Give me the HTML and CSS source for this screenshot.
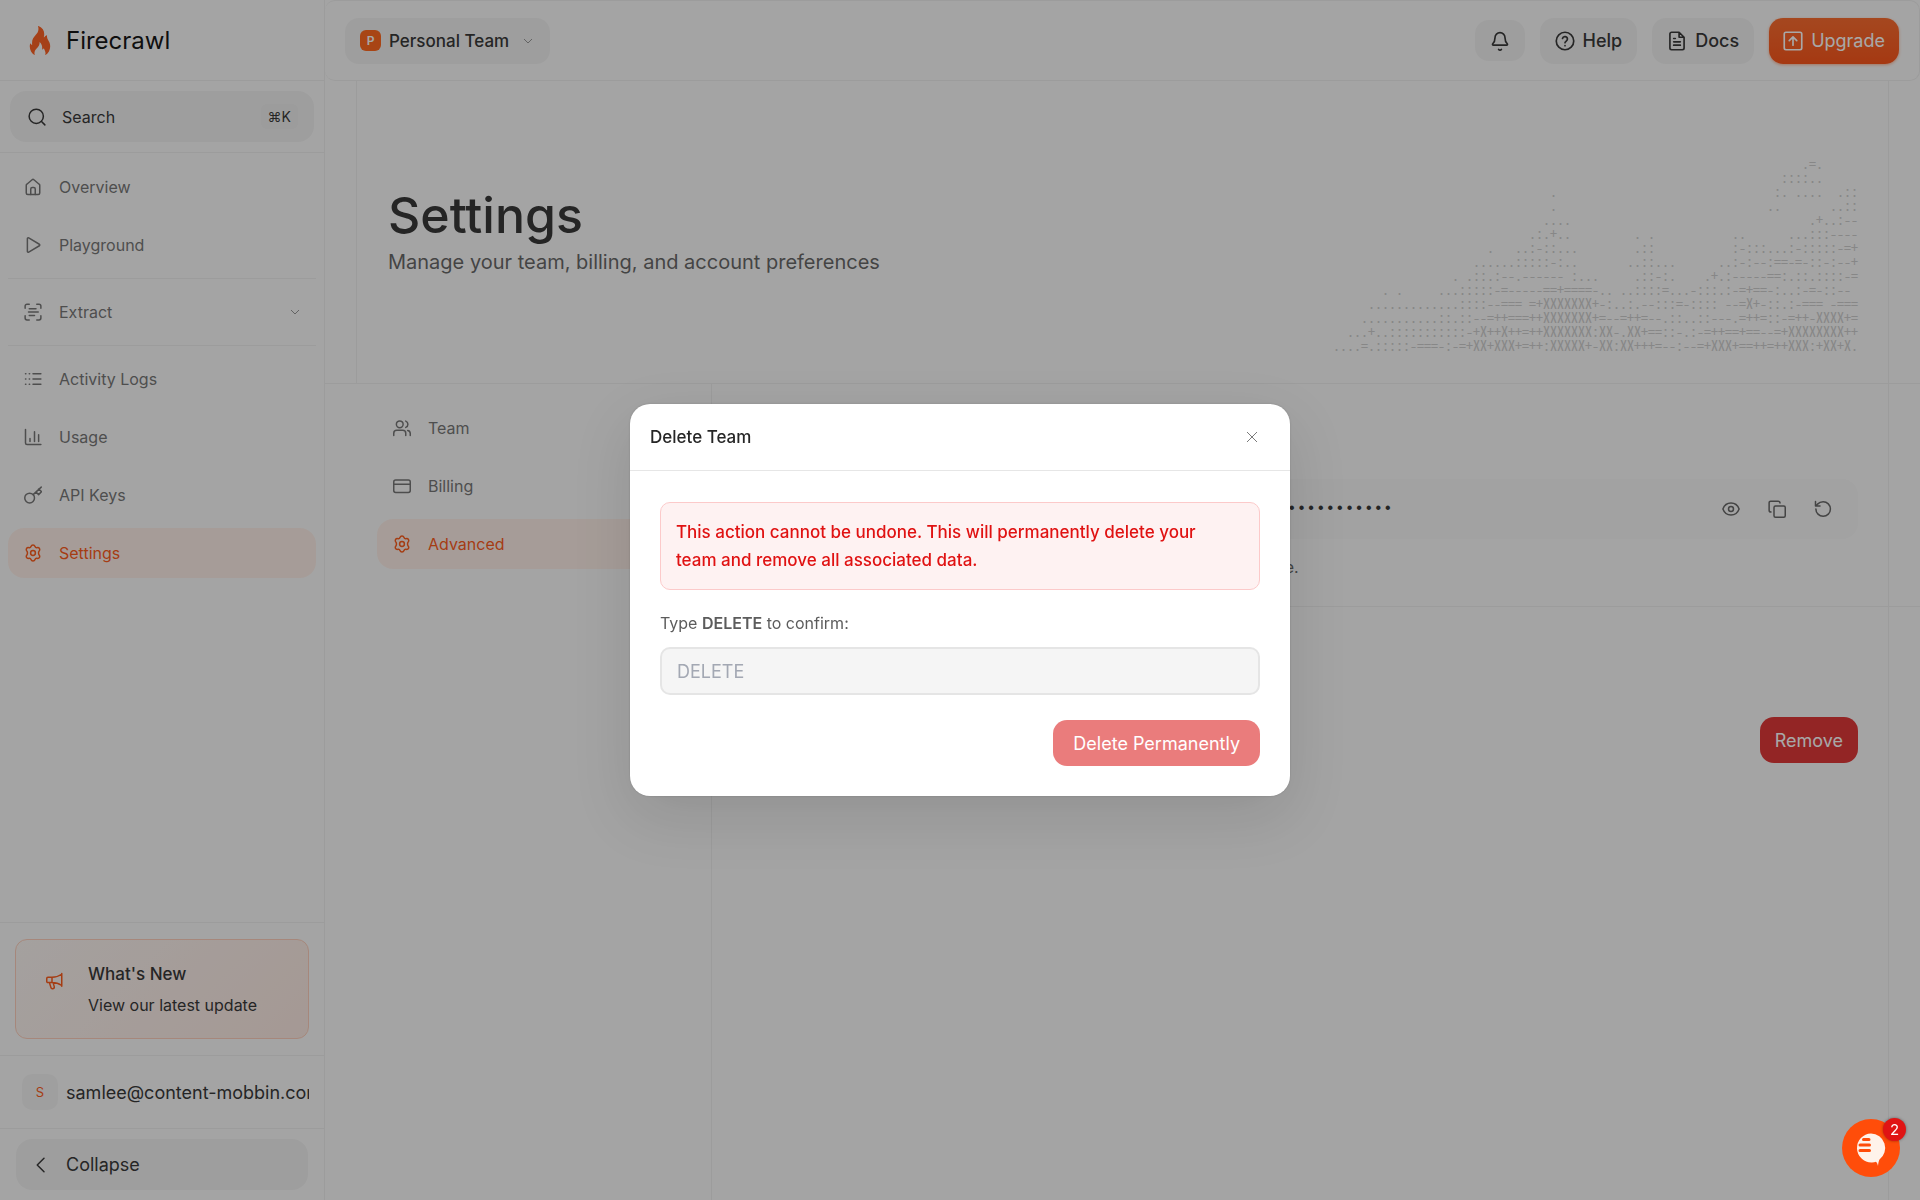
FILE: index.html
```html
<!DOCTYPE html>
<html lang="en">
<head>
    <meta charset="UTF-8">
    <meta name="viewport" content="width=device-width, initial-scale=1.0">
    <title>Settings - Firecrawl</title>
    <link rel="stylesheet" href="styles.css">
</head>
<body>
    <div class="app">
        <aside class="sidebar">
            <a class="brand" href="#">
                <svg class="brand-icon" viewBox="4 1.5 12 16" fill="currentColor"><path d="M13.76 6.614c-.622.185-1.092.603-1.435 1.057-.074.097-.228.024-.198-.095.658-2.706-.211-4.955-2.921-6.062-.138-.056-.281.067-.245.211 1.233 4.949-3.952 4.532-3.296 10.142.011.096-.097.162-.176.106-.246-.176-.52-.544-.708-.803-.055-.076-.175-.055-.2.036-.15.542-.221 1.052-.221 1.56 0 1.971 1.013 3.707 2.547 4.713.088.057.201-.025.171-.126a3 3 0 0 1-.127-.833c0-.177.011-.359.039-.528.064-.425.212-.829.46-1.197.85-1.276 2.554-2.509 2.282-4.183-.017-.105.108-.175.186-.103 1.201 1.097 1.438 2.573 1.241 3.896-.017.115.127.176.2.086.184-.23.408-.431.652-.583.061-.038.142-.009.165.059.136.395.337.765.528 1.136.227.446.349.954.33 1.493-.01.262-.053.515-.126.756-.031.102.081.187.17.129 1.535-1.006 2.549-2.742 2.549-4.715 0-.685-.12-1.357-.347-1.987-.476-1.321-1.684-2.313-1.378-4.035.014-.082-.062-.154-.142-.13z"/></svg>
                <span>Firecrawl</span>
            </a>

            <div class="search-wrap">
                <button class="search" type="button">
                    <svg class="icon" viewBox="0 0 24 24"><circle cx="11" cy="11" r="9.5"/><path d="m22.5 22.500-4.500-4.500"/></svg>
                    <span>Search</span>
                    <kbd>⌘K</kbd>
                </button>
            </div>

            <nav class="nav">
                <a class="nav-item" href="#">
                    <svg class="icon" viewBox="0 0 24 24"><path d="M3 10a2 2 0 0 1 .8-1.700l7-6a2 2 0 0 1 2.400 0l7 6A2 2 0 0 1 21 10v10a2 2 0 0 1-2 2H5a2 2 0 0 1-2-2z"/><path d="M9 22v-7.500a2 2 0 0 1 2-2h2a2 2 0 0 1 2 2V22"/></svg>
                    <span>Overview</span>
                </a>
                <a class="nav-item" href="#">
                    <svg class="icon" viewBox="0 0 24 24"><path d="M4.500 3.500v17a1.200 1.200 0 0 0 1.800 1l14.200-8.500a1.200 1.200 0 0 0 0-2L6.300 2.500a1.200 1.200 0 0 0-1.800 1z"/></svg>
                    <span>Playground</span>
                </a>
                <hr>
                <a class="nav-item" href="#">
                    <svg class="icon" viewBox="0 0 24 24"><path d="M1.500 7V4a2.500 2.500 0 0 1 2.500-2.500h3M17 1.500h3A2.500 2.500 0 0 1 22.500 4v3M22.500 17v3a2.500 2.500 0 0 1-2.500 2.500h-3M7 22.500H4A2.500 2.500 0 0 1 1.500 20v-3M7 7.500h9M6 12h13M7 16.500h7"/></svg>
                    <span>Extract</span>
                    <svg class="chevron" viewBox="0 0 10 10"><path d="m1 3 4 4 4-4"/></svg>
                </a>
                <hr>
                <a class="nav-item" href="#">
                    <svg class="icon" viewBox="0 0 24 24"><path d="M2 5h.5M7 5h.5M12 5h10.500M2 12h.5M7 12h.5M12 12h10.500M2 19h.5M7 19h.5M12 19h10.500"/></svg>
                    <span>Activity Logs</span>
                </a>
                <a class="nav-item" href="#">
                    <svg class="icon" viewBox="0 0 24 24"><path d="M2 2v18a2 2 0 0 0 2 2h18.500M8 18v-4M14 18V5M19.500 18V9"/></svg>
                    <span>Usage</span>
                </a>
                <a class="nav-item" href="#">
                    <svg class="icon" viewBox="0 0 24 24"><circle cx="7.500" cy="16" r="6.500"/><path d="M12.200 11.500 23 1.500M16 8l3.500 3.500 4-4-4-3.500"/></svg>
                    <span>API Keys</span>
                </a>
                <a class="nav-item active" href="#">
                    <svg class="icon" viewBox="0 0 24 24"><path d="M12 1.200c1.500 0 2.200.8 2.700 2.200.4 1.100 1.400 1.700 2.500 1.500 1.500-.3 2.700-.2 3.500 1.200s.3 2.500-.7 3.700c-.8.900-.8 3.500 0 4.400 1 1.200 1.500 2.300.7 3.700s-2 1.500-3.500 1.200c-1.100-.2-2.100.4-2.500 1.500-.5 1.400-1.200 2.200-2.700 2.200s-2.200-.8-2.700-2.200c-.4-1.100-1.400-1.700-2.500-1.500-1.500.3-2.700.2-3.500-1.200s-.3-2.500.7-3.700c.8-.9.8-3.500 0-4.400-1-1.200-1.500-2.300-.7-3.700s2-1.500 3.500-1.200c1.100.2 2.100-.4 2.500-1.500C9.800 2 10.500 1.200 12 1.200z"/><circle cx="12" cy="12" r="3.200"/></svg>
                    <span>Settings</span>
                </a>
            </nav>

            <div class="sidebar-block">
                <a class="news" href="#">
                    <svg class="icon" viewBox="0 0 24 24"><path d="M2.500 7H8c5 0 9.500-1.500 13-4v15c-3.500-2.500-8-4-13-4H2.500a1.500 1.500 0 0 1-1.500-1.500v-4A1.500 1.500 0 0 1 2.500 7zM8 7v7M4.500 14l2 6.500a2.300 2.300 0 0 0 4.500-1l-1.500-5M21 2v17"/></svg>
                    <span class="news-text">
                        <strong>What's New</strong>
                        <span>View our latest update</span>
                    </span>
                </a>
            </div>

            <div class="sidebar-block account">
                <span class="avatar">S</span>
                <span class="email">samlee@content-mobbin.com</span>
            </div>

            <div class="sidebar-block collapse-wrap">
                <button class="collapse" type="button">
                    <svg class="icon" viewBox="0 0 24 24"><path d="m16 3-9 9 9 9"/></svg>
                    <span>Collapse</span>
                </button>
            </div>
        </aside>

        <main class="main">
            <header class="topbar">
                <button class="btn btn-team" type="button">
                    <span class="team-badge">P</span>
                    <span>Personal Team</span>
                    <svg class="chevron" viewBox="0 0 10 10"><path d="m1 3 4 4 4-4"/></svg>
                </button>
                <div class="topbar-actions">
                    <button class="btn btn-icon" type="button" aria-label="Notifications">
                        <svg class="icon" viewBox="0 0 24 24"><path d="M10.300 22a2 2 0 0 0 3.400 0M3.300 15.300A1 1 0 0 0 4 17h16a1 1 0 0 0 .7-1.700C19.400 14 18 12.500 18 8A6 6 0 0 0 6 8c0 4.500-1.400 6-2.700 7.300"/></svg>
                    </button>
                    <a class="btn" href="#">
                        <svg class="icon" viewBox="0 0 24 24"><circle cx="12" cy="12" r="10.500"/><path d="M9 9a3 3 0 0 1 5.900 1c0 2-2.900 2.700-2.900 4M12 17.500v.1"/></svg>
                        <span>Help</span>
                    </a>
                    <a class="btn" href="#">
                        <svg class="icon" viewBox="0 0 24 24"><path d="M14.500 1.500H5.500a2 2 0 0 0-2 2v17a2 2 0 0 0 2 2h13a2 2 0 0 0 2-2V7.500zM14.500 1.500v6h6M8 9h2M8 13h8M8 17h8"/></svg>
                        <span>Docs</span>
                    </a>
                    <button class="btn btn-primary" type="button">
                        <svg class="icon" viewBox="0 0 24 24"><rect x="1.500" y="1.500" width="21" height="21" rx="2"/><path d="M12 17V7.500M7.500 11.500 12 7l4.500 4.500"/></svg>
                        <span>Upgrade</span>
                    </button>
                </div>
            </header>

            <section class="hero">
                <div class="hero-inner">
                    <div>
                        <h1>Settings</h1>
                        <p>Manage your team, billing, and account preferences</p>
                    </div>
                    <pre class="ascii" aria-hidden="true">
                                                                   .=.     
                                                                ::::..     
                               .                               :. ....  .::
                               .                              ..       ..::
                              ....                                  .+..:--
                            .:.+..         . .           ..      ...:::----
                      .   ..:-::...        .::           :-:::...:-:::::-=+
                    ......:::::-:..       ..::...      ..:-:--:==-=-::-:--+
                 . .::.:--.------ :...     .::-:.    .+.:-----==:.::.::::-=
       . .     ...:::::-=-----==+====-.. ..::::=...-:::.:-=+==-:..:-=-::-- 
     .............::::--=== =+XXXXXXX+-:..:.--:::=-:::: --=X+-::.:-=== -===
    ...........::.::--=++===++XXXXXXX+=--=++=--.::..::---.=++=::-=++-XXXX+=
  ...+..:::::::::::-+X++X++=++XXXXXXX:XX-.XX+==::-.:-=++==+==--=+XXXXXXXX++
....=.:::::-===-:-=+XX+XXX+=++:XXXXX+-XX:XX+++=--:--=+XXX+==++=++XXX:+XX+X.</pre>
                </div>
            </section>

            <div class="content">
                <nav class="subnav">
                    <a class="nav-item" href="#">
                        <svg class="icon" viewBox="0 0 24 24"><circle cx="9" cy="7" r="4.500"/><path d="M1 22v-3a4 4 0 0 1 4-4h8a4 4 0 0 1 4 4v3M17 2.800a4.500 4.500 0 0 1 0 8.400M19.500 15.200A4 4 0 0 1 23 19v3"/></svg>
                        <span>Team</span>
                    </a>
                    <a class="nav-item" href="#">
                        <svg class="icon" viewBox="0 0 24 24"><rect x="1" y="4" width="22" height="16.500" rx="2.500"/><path d="M1 9.500h22"/></svg>
                        <span>Billing</span>
                    </a>
                    <a class="nav-item active" href="#">
                        <svg class="icon" viewBox="0 0 24 24"><path d="M12 1.200c1.500 0 2.200.8 2.700 2.200.4 1.100 1.400 1.700 2.500 1.500 1.500-.3 2.700-.2 3.500 1.200s.3 2.500-.7 3.700c-.8.900-.8 3.500 0 4.400 1 1.200 1.500 2.300.7 3.700s-2 1.500-3.500 1.200c-1.100-.2-2.100.4-2.500 1.500-.5 1.400-1.200 2.200-2.700 2.200s-2.200-.8-2.700-2.200c-.4-1.100-1.400-1.700-2.500-1.500-1.500.3-2.700.2-3.500-1.200s-.3-2.500.7-3.700c.8-.9.8-3.500 0-4.400-1-1.200-1.500-2.300-.7-3.700s2-1.500 3.500-1.200c1.100.2 2.100-.4 2.500-1.500C9.800 2 10.500 1.200 12 1.200z"/><circle cx="12" cy="12" r="3.200"/></svg>
                        <span>Advanced</span>
                    </a>
                </nav>

                <div class="panels">
                    <section class="panel" aria-label="API key">
                        <div class="secret">
                            <span class="secret-value">••••••••••••••••••••••••••••••••••••••••••••••••••••••••••••••••••</span>
                            <button type="button" aria-label="Show key">
                                <svg class="icon" viewBox="0 0 24 24"><path d="M1.200 12C3 7 7 4 12 4s9 3 10.800 8C21 17 17 20 12 20s-9-3-10.800-8z"/><circle cx="12" cy="12" r="3.300"/></svg>
                            </button>
                            <button type="button" aria-label="Copy key">
                                <svg class="icon" viewBox="0 0 24 24"><rect x="8" y="8" width="15" height="15" rx="2"/><path d="M4 16a2.500 2.500 0 0 1-2.500-2.500V3.500a2 2 0 0 1 2-2h10A2.500 2.500 0 0 1 16 4"/></svg>
                            </button>
                            <button type="button" aria-label="Rotate key">
                                <svg class="icon" viewBox="0 0 24 24"><path d="M2 2v6h6M2.500 12a9.700 9.700 0 1 0 9.700-9.700c-3 0-5.600 1.200-7.500 3.200L2.500 8"/></svg>
                            </button>
                        </div>
                        <p>Keep this key private. Anybody who has it can make requests at any time.</p>
                    </section>
                    <section class="panel danger" aria-label="Delete team">
                        <button class="btn btn-danger" type="button">Remove</button>
                    </section>
                </div>
            </div>
        </main>
    </div>

    <div class="overlay">
        <div class="modal" role="dialog" aria-modal="true" aria-labelledby="modalTitle">
            <div class="modal-header">
                <h2 id="modalTitle">Delete Team</h2>
                <button class="close" type="button" aria-label="Close">
                    <svg viewBox="0 0 12 12"><path d="m1 1 10 10M11 1 1 11"/></svg>
                </button>
            </div>
            <form class="modal-body">
                <p class="alert">This action cannot be undone. This will permanently delete your team and remove all associated data.</p>
                <label for="confirm">Type <strong>DELETE</strong> to confirm:</label>
                <input type="text" id="confirm" name="confirm" placeholder="DELETE">
                <button class="btn btn-delete" type="submit" disabled>Delete Permanently</button>
            </form>
        </div>
    </div>

    <button class="chat" type="button" aria-label="Open chat">
        <svg viewBox="0 0 58 58"><path d="M29 14.500a14.500 14.500 0 1 0 1 29c1.500 0 2.800-.2 4-.7.900.6 1.500 2.200 2 4.200.3-2.500.7-5.300 1.500-6.500A14.500 14.500 0 0 0 29 14.500z" fill="#fff3ea"/><path d="M21.500 20.500h5.500M18 26h9.500M18 31.500h9.500" stroke="#ff4d0a" stroke-width="3" stroke-linecap="round"/></svg>
        <span class="chat-count">2</span>
    </button>
</body>
</html>
```
FILE: styles.css
```css
* {
    box-sizing: border-box;
}
body {
    margin: 0;
    font-family: Inter, "Liberation Sans", sans-serif;
    font-size: 18px;
    color: #262626;
    background-color: #f9f9f9;
}
a {
    color: inherit;
    text-decoration: none;
}
button, input {
    font: inherit;
    color: inherit;
}
button {
    border: none;
    background: none;
    padding: 0;
    cursor: pointer;
}
h1, h2, p {
    margin: 0;
}
.app {
    display: flex;
    min-height: 100vh;
}
.icon {
    width: 18px;
    height: 18px;
    flex: none;
    fill: none;
    stroke: currentColor;
    stroke-width: 2;
    stroke-linecap: round;
    stroke-linejoin: round;
}
.chevron {
    width: 10px;
    height: 10px;
    flex: none;
    fill: none;
    stroke: #8c8c8c;
    stroke-width: 1;
}

/* sidebar */
.sidebar {
    width: 325px;
    flex: none;
    display: flex;
    flex-direction: column;
    border-right: 1px solid #ebebeb;
}
.brand {
    display: flex;
    align-items: center;
    gap: 15px;
    height: 81px;
    padding-left: 29px;
    border-bottom: 1px solid #ebebeb;
    font-size: 24px;
    color: #000;
}
.brand-icon {
    width: 22px;
    height: 29px;
    color: #fa5310;
}
.search-wrap {
    padding: 10px;
    border-bottom: 1px solid #ebebeb;
}
.search {
    display: flex;
    align-items: center;
    gap: 16px;
    width: 100%;
    height: 51px;
    padding: 0 16px 0 18px;
    border-radius: 16px;
    background-color: #efefef;
    font-size: 16px;
    text-align: left;
}
.search kbd {
    margin-left: auto;
    padding: 4px 7px;
    border-radius: 6px;
    background-color: #ebebeb;
    font-family: inherit;
    font-size: 14px;
}
.nav {
    flex: 1;
    display: flex;
    flex-direction: column;
    gap: 8px;
    padding: 9px 8px;
}
.nav hr {
    width: 100%;
    margin: 0;
    border: none;
    border-top: 1px solid #ebebeb;
}
.nav-item {
    display: flex;
    align-items: center;
    gap: 17px;
    height: 50px;
    padding: 0 16px;
    border-radius: 16px;
    font-size: 16px;
    color: #6a6a6a;
}
.nav-item .chevron {
    margin-left: auto;
}
.nav-item.active {
    background-color: #fcece5;
    color: #fa4d08;
}
.sidebar-block {
    padding: 16px 15px;
    border-top: 1px solid #ebebeb;
}
.news {
    display: flex;
    gap: 24px;
    height: 100px;
    padding: 21px 30px;
    border: 1px solid #fcc9b4;
    border-radius: 12px;
    background: linear-gradient(135deg, #f9f3f0, #fbe6de);
}
.news .icon {
    margin-top: 11px;
    color: #fa4d08;
}
.news-text {
    display: flex;
    flex-direction: column;
    gap: 5px;
    font-size: 16px;
    line-height: 26px;
}
.news-text strong {
    font-size: 17px;
    font-weight: 500;
}
.account {
    display: flex;
    align-items: center;
    gap: 8px;
    height: 73px;
    padding-left: 22px;
}
.avatar {
    flex: none;
    width: 36px;
    height: 36px;
    border-radius: 10px;
    background-color: #f1f1f1;
    color: #fa4d08;
    font-size: 13px;
    line-height: 36px;
    text-align: center;
}
.email {
    overflow: hidden;
    white-space: nowrap;
}
.collapse-wrap {
    padding: 10px 16px;
}
.collapse {
    display: flex;
    align-items: center;
    gap: 16px;
    width: 100%;
    height: 51px;
    padding: 0 16px;
    border-radius: 16px;
    background-color: #efefef;
}

/* main column */
.main {
    flex: 1;
    min-width: 0;
    display: flex;
    flex-direction: column;
}
.topbar {
    display: flex;
    align-items: center;
    justify-content: space-between;
    height: 81px;
    padding: 0 20px;
    border: 1px solid #ebebeb;
    border-left: none;
    border-radius: 10px;
}
.topbar-actions {
    display: flex;
    align-items: center;
    gap: 15px;
}
.topbar-actions .icon {
    width: 20px;
    height: 20px;
}
.btn {
    display: flex;
    align-items: center;
    gap: 8px;
    height: 46px;
    padding: 0 15px;
    border-radius: 14px;
    background-color: #efefef;
    font-weight: 500;
}
.btn-team {
    font-size: 17px;
}
.btn .chevron {
    margin: 0 2px 0 6px;
}
.btn-icon {
    height: 41px;
}
.btn-primary {
    padding: 0 14px;
    background: linear-gradient(#fa5f1c, #fa4606);
    box-shadow: 0 1px 3px rgba(250, 93, 25, 0.5);
    color: #fff;
    font-weight: 400;
}
.btn-danger {
    background-color: #dc2626;
    color: #fff;
    font-weight: 400;
}
.team-badge {
    width: 21px;
    height: 21px;
    border-radius: 6px;
    background-color: #ff5a0a;
    color: #fff;
    font-size: 12px;
    font-weight: 600;
    line-height: 21px;
    text-align: center;
}
.hero {
    border-bottom: 1px solid #ebebeb;
    padding: 0 31px;
}
.hero-inner {
    display: flex;
    justify-content: space-between;
    height: 302px;
    padding: 0 30px 0 31px;
    border: 1px solid #ebebeb;
    border-width: 0 1px;
}
h1 {
    margin: 102px 0 1px;
    font-size: 50px;
    font-weight: 500;
    line-height: 64px;
}
.hero p {
    color: #595959;
    font-size: 20px;
    line-height: 28px;
}
.ascii {
    margin: 75px 0 0;
    font-family: "Noto Sans Mono CJK SC", "Liberation Mono", monospace;
    font-size: 14px;
    line-height: 14px;
    color: #c8c8c8;
}
.content {
    flex: 1;
    display: flex;
}
.subnav {
    width: 387px;
    flex: none;
    display: flex;
    flex-direction: column;
    gap: 8px;
    padding: 19px 20px 0 52px;
    border-right: 1px solid #ebebeb;
}
.panels {
    flex: 1;
    background: linear-gradient(#ebebeb, #ebebeb) right 31px top / 1px 100% no-repeat;
}
.panel {
    padding: 95px 62px 0 31px;
}
.panel:first-child {
    height: 223px;
    border-bottom: 1px solid #ebebeb;
}
.panel p {
    color: #595959;
    font-size: 16px;
    line-height: 24px;
}
.secret {
    display: flex;
    align-items: center;
    gap: 28px;
    height: 60px;
    margin-bottom: 16px;
    padding: 0 26px 0 16px;
    border-radius: 16px;
    background-color: #f5f5f5;
}
.secret button {
    display: flex;
    color: #595959;
}
.secret-value {
    margin-right: auto;
    font-family: "Liberation Mono", monospace;
    font-size: 16px;
}
.danger {
    display: flex;
    justify-content: flex-end;
    padding-top: 110px;
}

/* modal */
.overlay {
    position: fixed;
    inset: 0;
    display: flex;
    align-items: center;
    justify-content: center;
    background-color: rgba(38, 38, 38, 0.4);
}
.modal {
    width: 660px;
    border-radius: 20px;
    background-color: #fff;
    box-shadow: 0 0 2px rgba(0, 0, 0, 0.2), 0 20px 60px rgba(0, 0, 0, 0.12);
}
.modal-header {
    display: flex;
    align-items: center;
    justify-content: space-between;
    height: 67px;
    padding: 0 30px 0 20px;
    border-bottom: 1px solid #e6e6e6;
}
.modal-header h2 {
    font-size: 17px;
    font-weight: 500;
}
.close {
    display: flex;
    padding: 2px;
}
.close svg {
    width: 12px;
    height: 12px;
    fill: none;
    stroke: #7a7a7a;
}
.modal-body {
    display: flex;
    flex-direction: column;
    padding: 31px 30px 30px;
}
.alert {
    padding: 15px 30px 15px 15px;
    border: 1px solid #fccaca;
    border-radius: 10px;
    background-color: #fef2f2;
    color: #e01212;
    font-size: 17px;
    font-weight: 500;
    line-height: 28px;
}
.modal-body label {
    margin-top: 20px;
    color: #5c5c5c;
    font-size: 16px;
    line-height: 26px;
}
.modal-body label strong {
    font-weight: 600;
}
.modal-body input {
    height: 48px;
    margin: 11px 0 25px;
    padding: 0 15px;
    border: 2px solid #e5e5e5;
    border-radius: 10px;
    background-color: #f5f5f5;
}
.modal-body input::placeholder {
    color: #a3a8b3;
}
.btn-delete {
    align-self: flex-end;
    padding: 0 20px;
    background-color: #dc2626;
    color: #fff;
    font-weight: 400;
    opacity: 0.6;
}

/* chat launcher */
.chat {
    position: fixed;
    right: 20px;
    bottom: 23px;
    width: 58px;
    height: 58px;
    border-radius: 50%;
    background-color: #ff4d0a;
}
.chat svg {
    display: block;
}
.chat-count {
    position: absolute;
    top: -1px;
    right: -6px;
    width: 23px;
    height: 23px;
    border-radius: 50%;
    background-color: #e01414;
    box-shadow: 0 0 3px rgba(0, 0, 0, 0.4);
    color: #fff;
    font-size: 15px;
    line-height: 23px;
}
```
